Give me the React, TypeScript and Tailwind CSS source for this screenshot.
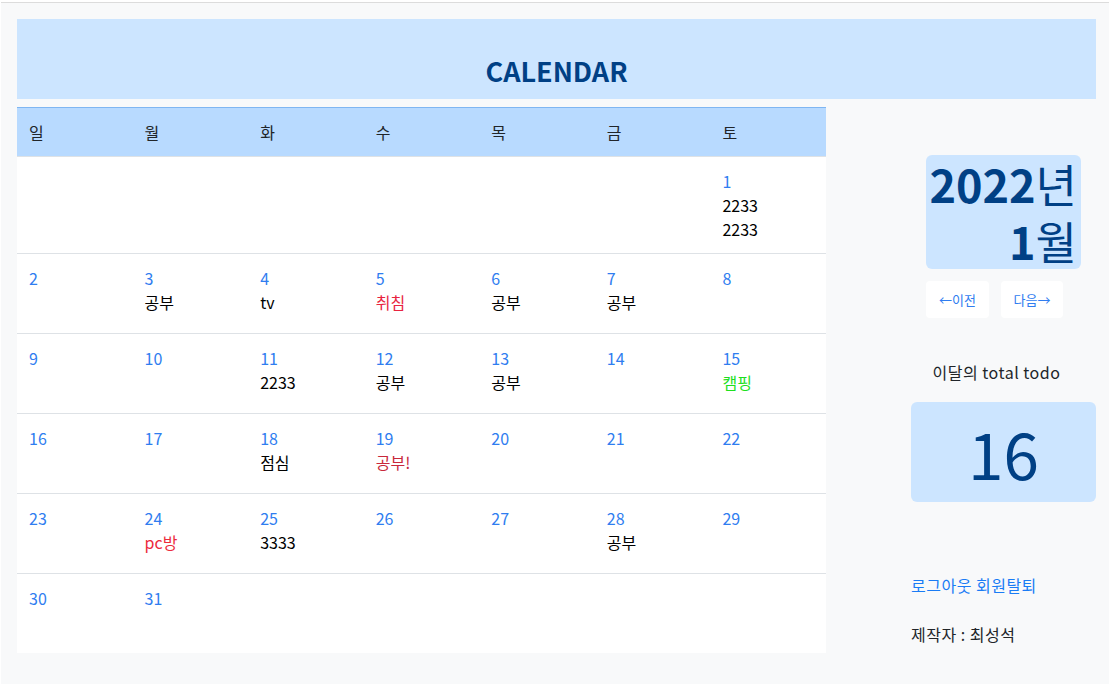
import React from 'react';

type Todo = { text: string; color: string };

const days = ['일', '월', '화', '수', '목', '금', '토'];

const todos: Record<number, Todo[]> = {
  1: [{ text: '2233', color: 'text-black' }, { text: '2233', color: 'text-black' }],
  3: [{ text: '공부', color: 'text-black' }],
  4: [{ text: 'tv', color: 'text-black' }],
  5: [{ text: '취침', color: 'text-[#e8243f]' }],
  6: [{ text: '공부', color: 'text-black' }],
  7: [{ text: '공부', color: 'text-black' }],
  11: [{ text: '2233', color: 'text-black' }],
  12: [{ text: '공부', color: 'text-black' }],
  13: [{ text: '공부', color: 'text-black' }],
  15: [{ text: '캠핑', color: 'text-[#1ee01e]' }],
  18: [{ text: '점심', color: 'text-black' }],
  19: [{ text: '공부!', color: 'text-[#c8283a]' }],
  24: [{ text: 'pc방', color: 'text-[#ec2a3c]' }],
  25: [{ text: '3333', color: 'text-black' }],
  28: [{ text: '공부', color: 'text-black' }],
};

// January 2022 starts on Saturday
const weeks: (number | null)[][] = [
  [null, null, null, null, null, null, 1],
  [2, 3, 4, 5, 6, 7, 8],
  [9, 10, 11, 12, 13, 14, 15],
  [16, 17, 18, 19, 20, 21, 22],
  [23, 24, 25, 26, 27, 28, 29],
  [30, 31, null, null, null, null, null],
];

const CalendarTable = () => (
  <div className="w-[809px] shrink-0 bg-white">
    <div className="grid grid-cols-7 border-t border-[#7fb6f2] border-b border-b-[#dee2e6] bg-[#b8daff]">
      {days.map(d => (
        <div key={d} className="px-3 py-3 text-[16px] leading-6 text-[#212529]">{d}</div>
      ))}
    </div>
    {weeks.map((week, wi) => (
      <div
        key={wi}
        className={`grid grid-cols-7 ${wi < weeks.length - 1 ? 'border-b border-[#dee2e6]' : ''}`}
      >
        {week.map((day, di) => (
          <div key={di} className="min-h-[79px] p-3 text-[16px] leading-6">
            {day !== null && (
              <>
                <div className="text-[#2f7df0]">{day}</div>
                {(todos[day] || []).map((t, i) => (
                  <div key={i} className={t.color}>{t.text}</div>
                ))}
              </>
            )}
          </div>
        ))}
      </div>
    ))}
  </div>
);

const SidePanel = () => (
  <div className="flex flex-1 justify-end pt-12">
    <div className="w-[185px]">
      <div className="mx-auto w-[155px]">
        <div className="h-[114px] rounded-md bg-[#cce5ff] pr-1 text-right text-[45px] leading-[57px] text-[#004085]">
          <div><span className="font-semibold">2022</span>년</div>
          <div><span className="font-semibold">1</span>월</div>
        </div>
        <div className="mt-3 flex gap-3">
          <button className="h-[37px] w-[63px] rounded bg-white text-[13px] text-[#2f7df0]">←이전</button>
          <button className="h-[37px] w-[62px] rounded bg-white text-[13px] text-[#2f7df0]">다음→</button>
        </div>
      </div>
      <div className="mt-[42px] pr-[14px] text-center text-[16px] leading-6 tracking-[0.5px] text-[#212529]">이달의 total todo</div>
      <div className="mt-[18px] flex h-[100px] items-center justify-center rounded-md bg-[#cce5ff] text-[64px] text-[#004085]">
        16
      </div>
      <div className="mt-[71px] text-[16px] leading-6 tracking-[0.5px] text-[#1a7cf5]">로그아웃 회원탈퇴</div>
      <div className="mt-[25px] text-[16px] leading-6 tracking-[0.5px] text-[#212529]">제작자 : 최성석</div>
    </div>
  </div>
);

export default function App() {
  return (
    <div className="min-h-screen bg-white pt-[2px] font-['Noto_Sans_CJK_KR','Noto_Sans',sans-serif]">
      <div className="mx-px border-t border-[#dcdcdc] bg-[#f8f9fa] pb-[31px] pl-4 pr-[13px] pt-4">
        <div className="flex h-20 items-end justify-center bg-[#cce5ff] pb-[10px]">
          <h1 className="text-[27px] font-bold leading-9 text-[#004085]">CALENDAR</h1>
        </div>
        <div className="mt-2 flex">
          <CalendarTable />
          <SidePanel />
        </div>
      </div>
    </div>
  );
}
